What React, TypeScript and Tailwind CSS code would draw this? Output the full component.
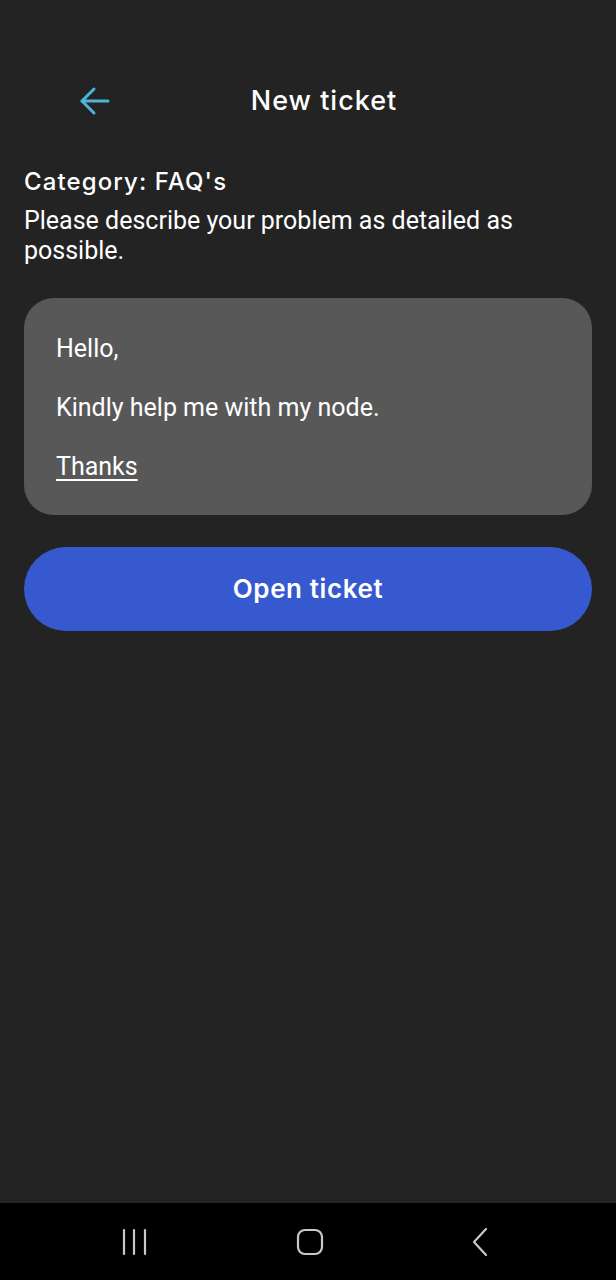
export default function App() {
  const heading = { fontFamily: 'Inter, "Noto Sans", sans-serif' };
  const body = { fontFamily: 'Roboto, "Liberation Sans", sans-serif' };

  return (
    <div className="w-[616px] h-[1280px] bg-[#232323] flex flex-col text-white">
      <main className="flex-1 flex flex-col pt-[73px]">
        {/* Header */}
        <header className="h-[56px] flex items-center">
          <button className="ml-[79px] w-[32px] h-[32px] flex items-center justify-center text-[#4fb3d9]">
            <svg width="32" height="32" viewBox="0 0 32 32" fill="none" stroke="currentColor" strokeWidth="3" strokeLinecap="round" strokeLinejoin="round">
              <path d="M29 16H3" />
              <path d="M15 4L3 16L15 28" />
            </svg>
          </button>
          <h1 className="flex-1 text-center pr-[79px] text-[27px] font-medium tracking-[1px]" style={heading}>
            New ticket
          </h1>
        </header>

        <section className="px-[24px] pt-[38px]">
          <p className="text-[24px] leading-[30px] font-medium tracking-[1.1px]" style={heading}>
            Category: FAQ's
          </p>
          <p className="mt-[9px] text-[25px] leading-[30px] pr-[60px]" style={body}>
            Please describe your problem as detailed as possible.
          </p>
        </section>

        {/* Message box */}
        <div className="mx-[24px] mt-[32px] h-[217px] rounded-[30px] bg-[#585858] px-[32px] pt-[36px] text-[25px] leading-[29.5px]" style={body}>
          <p>Hello,</p>
          <p className="mt-[29.5px]">Kindly help me with my node.</p>
          <p className="mt-[29.5px] underline underline-offset-[4px] decoration-[1.5px]">Thanks</p>
        </div>

        <button className="mx-[24px] mt-[32px] h-[84px] rounded-full bg-[#3759cf] pb-[2px] text-[26px] font-semibold tracking-[0.6px]" style={heading}>
          Open ticket
        </button>
      </main>

      {/* Android nav bar */}
      <nav className="h-[77px] bg-black flex items-center justify-between pl-[120px] pr-[126px]">
        <svg width="30" height="28" viewBox="0 0 30 28" fill="none" stroke="#c8c8c8" strokeWidth="2.2" strokeLinecap="round">
          <path d="M4 2V26" />
          <path d="M14 2V26" />
          <path d="M25 2V26" />
        </svg>
        <svg width="28" height="28" viewBox="0 0 28 28" fill="none" stroke="#c8c8c8" strokeWidth="2.2">
          <rect x="2" y="2" width="24" height="24" rx="7" />
        </svg>
        <svg width="20" height="30" viewBox="0 0 20 30" fill="none" stroke="#c8c8c8" strokeWidth="2.2" strokeLinecap="round" strokeLinejoin="round">
          <path d="M16 2L4 15L16 28" />
        </svg>
      </nav>
    </div>
  );
}
